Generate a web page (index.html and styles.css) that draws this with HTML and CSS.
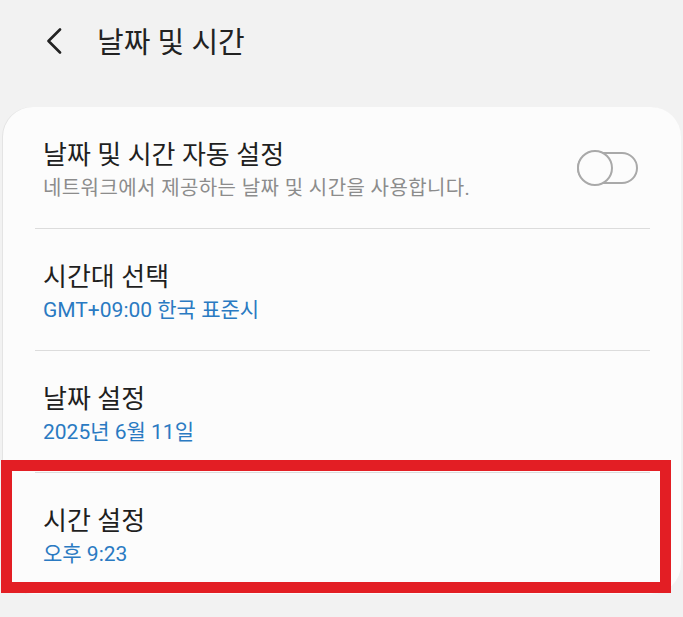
FILE: index.html
```html
<!DOCTYPE html>
<html lang="ko">
<head>
    <meta charset="UTF-8">
    <title>날짜 및 시간</title>
    <meta name="viewport" content="width=device-width, initial-scale=1.0">
    <link rel="stylesheet" href="styles.css">
</head>
<body>
    <header class="app-bar">
        <svg class="back-icon" width="16" height="26" viewBox="0 0 16 26">
            <path d="M14 1.5 L2.5 13 L14 24.5" fill="none" stroke="#222" stroke-width="2.6" stroke-linecap="round" stroke-linejoin="round"/>
        </svg>
        <h1 class="app-title">날짜 및 시간</h1>
    </header>

    <main class="card">
        <div class="row">
            <div class="row-text">
                <div class="row-title">날짜 및 시간 자동 설정</div>
                <div class="row-sub row-sub-grey">네트워크에서 제공하는 날짜 및 시간을 사용합니다.</div>
            </div>
            <div class="switch">
                <span class="switch-thumb"></span>
            </div>
        </div>
        <div class="divider"></div>

        <div class="row">
            <div class="row-text">
                <div class="row-title">시간대 선택</div>
                <div class="row-sub">GMT+09:00 한국 표준시</div>
            </div>
        </div>
        <div class="divider"></div>

        <div class="row">
            <div class="row-text">
                <div class="row-title">날짜 설정</div>
                <div class="row-sub">2025년 6월 11일</div>
            </div>
        </div>
        <div class="divider"></div>

        <div class="row">
            <div class="row-text">
                <div class="row-title">시간 설정</div>
                <div class="row-sub">오후 9:23</div>
            </div>
            <span class="highlight-box"></span>
        </div>
    </main>
</body>
</html>
```

FILE: styles.css
```css
body {
    margin: 0;
    background-color: #f2f2f2;
    font-family: Roboto, "Noto Sans CJK KR", sans-serif;
    color: #1f1f1f;
    width: 683px;
    height: 617px;
    overflow: hidden;
}

.app-bar {
    display: flex;
    align-items: center;
    height: 82px;
    padding-left: 46px;
}

.back-icon {
    display: block;
    margin-top: 0;
}

.app-title {
    margin: 3px 0 0 35px;
    font-size: 29px;
    font-weight: 400;
    line-height: 34px;
    color: #222;
}

.card {
    margin: 25px 2px 0 3px;
    background-color: #fcfcfc;
    border-radius: 30px;
    box-shadow: -1px 0 0 #e4e4e4;
}

.row {
    position: relative;
    display: flex;
    align-items: center;
    height: 121px;
    padding: 0 43px 0 40px;
}

.divider {
    height: 1px;
    margin: 0 31px 0 32px;
    background-color: #dcdcdc;
}

.row-text {
    flex: 1;
    padding-top: 4px;
}

.row-title {
    font-size: 26px;
    line-height: 34px;
}

.row-sub {
    margin-top: 3px;
    font-size: 21px;
    line-height: 26px;
    color: #2a7ac2;
}

.row-sub-grey {
    font-size: 20px;
    letter-spacing: 0.4px;
    color: #8c8c8c;
}

.switch {
    position: relative;
    width: 57px;
    height: 28px;
    border: 2px solid #a9a9a9;
    border-radius: 16px;
}

.switch-thumb {
    position: absolute;
    left: -2px;
    top: -4px;
    width: 32px;
    height: 32px;
    border: 2px solid #a9a9a9;
    border-radius: 50%;
    background: #fcfcfc;
}

.highlight-box {
    position: absolute;
    left: -2px;
    top: -13px;
    width: 648px;
    height: 111px;
    border: 11px solid #e31e24;
}
```
